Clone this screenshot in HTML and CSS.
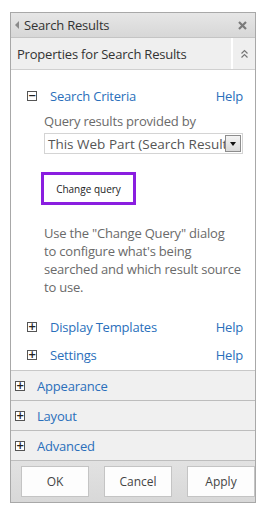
FILE: index.html
```html
<!DOCTYPE html>
<html lang="en">
<head>
    <meta charset="UTF-8">
    <meta name="viewport" content="width=device-width, initial-scale=1.0">
    <title>Search Results</title>
    <link rel="stylesheet" href="styles.css">
</head>
<body>
    <div class="panel">
        <div class="title-bar">
            <span class="title-arrow"></span>
            <span class="title-text">Search Results</span>
            <svg class="close" width="9" height="9" viewBox="0 0 9 9">
                <path d="M1 1 L8 8 M8 1 L1 8" stroke="#7a7a7a" stroke-width="2.2"/>
            </svg>
        </div>

        <div class="props-header">
            <div class="props-title">Properties for Search Results</div>
            <div class="props-toggle">
                <svg width="9" height="10" viewBox="0 0 9 10">
                    <path d="M1.5 4.5 L4.5 1.5 L7.5 4.5 M1.5 8.5 L4.5 5.5 L7.5 8.5" fill="none" stroke="#777" stroke-width="1.2"/>
                </svg>
            </div>
        </div>

        <div class="props-body">
            <div class="group">
                <div class="group-head">
                    <span class="toggle-box">&minus;</span>
                    <a class="group-name">Search Criteria</a>
                    <a class="help">Help</a>
                </div>
                <div class="group-content">
                    <div class="field-label">Query results provided by</div>
                    <div class="select">
                        <span class="select-text">This Web Part (Search Results)</span>
                        <span class="select-btn"></span>
                    </div>
                    <button class="change-query">Change query</button>
                    <p class="hint">Use the "Change Query" dialog<br>to configure what's being<br>searched and which result source<br>to use.</p>
                </div>
            </div>

            <div class="group">
                <div class="group-head">
                    <span class="toggle-box">+</span>
                    <a class="group-name">Display Templates</a>
                    <a class="help">Help</a>
                </div>
            </div>

            <div class="group">
                <div class="group-head">
                    <span class="toggle-box">+</span>
                    <a class="group-name">Settings</a>
                    <a class="help">Help</a>
                </div>
            </div>
        </div>

        <div class="section"><span class="toggle-box">+</span><a class="section-name">Appearance</a></div>
        <div class="section"><span class="toggle-box">+</span><a class="section-name">Layout</a></div>
        <div class="section"><span class="toggle-box">+</span><a class="section-name">Advanced</a></div>

        <div class="footer">
            <button class="btn">OK</button>
            <button class="btn">Cancel</button>
            <button class="btn">Apply</button>
        </div>
    </div>
</body>
</html>
```

FILE: styles.css
```css
:root {
    --link-color: #2a6fbb;
    --text-color: #444;
    --muted-color: #6a6a6a;
    --border-color: #a8a8a8;
}

* {
    margin: 0;
    padding: 0;
    box-sizing: border-box;
}

body {
    font-family: "Open Sans", "Noto Sans", sans-serif;
    background: #fff;
    color: var(--text-color);
    padding: 12px 9px 0 10px;
}

.panel {
    width: 246px;
    border: 1px solid var(--border-color);
    background: #fff;
}

.title-bar {
    height: 25px;
    display: flex;
    align-items: center;
    padding: 0 8px 0 4px;
    background: linear-gradient(#e6e6e6, #d7d7d7);
    border-bottom: 1px solid #c4c4c4;
    font-size: 13px;
    color: #333;
}

.title-arrow {
    width: 0;
    height: 0;
    border-top: 4px solid transparent;
    border-bottom: 4px solid transparent;
    border-right: 4px solid #8a8a8a;
    margin-right: 5px;
}

.title-text {
    flex: 1;
    letter-spacing: -0.2px;
}

.props-header {
    display: flex;
    height: 32px;
    gap: 2px;
    border-bottom: 1px solid #d0d0d0;
}

.props-title {
    flex: 1;
    background: #efefef;
    display: flex;
    align-items: center;
    padding-left: 6px;
    font-size: 13px;
    color: #333;
    letter-spacing: -0.2px;
}

.props-toggle {
    width: 22px;
    background: #efefef;
    display: flex;
    align-items: center;
    justify-content: center;
}

.props-body {
    padding: 17px 12px 6px 16px;
    border-bottom: 1px solid #c8c8c8;
}

.group-head {
    display: flex;
    align-items: center;
    height: 18px;
    margin-bottom: 10px;
}

.group:last-child .group-head {
    margin-bottom: 0;
}

.toggle-box {
    width: 10px;
    height: 10px;
    border: 1px solid #555;
    background: #fff;
    font-size: 10px;
    line-height: 8px;
    text-align: center;
    color: #222;
    font-family: "DejaVu Sans", sans-serif;
    font-weight: bold;
    margin-right: 13px;
    flex-shrink: 0;
}

.group-name, .help, .section-name {
    color: var(--link-color);
    font-size: 13px;
    letter-spacing: -0.2px;
}

.group-name {
    flex: 1;
}

.group-content {
    padding-left: 17px;
    margin-top: -3px;
    margin-bottom: 22px;
}

.field-label {
    font-size: 13px;
    color: var(--muted-color);
    letter-spacing: -0.2px;
    margin-bottom: 3px;
}

.select {
    display: flex;
    align-items: center;
    height: 21px;
    border: 1px solid #d4d4d4;
    overflow: hidden;
}

.select-text {
    flex: 1;
    white-space: nowrap;
    overflow: hidden;
    font-size: 13.5px;
    color: #555;
    padding-left: 3px;
}

.select-btn {
    width: 16px;
    height: 17px;
    margin-right: 1px;
    border: 1px solid #8d8d8d;
    background: linear-gradient(#f4f4f4, #d9d9d9);
    position: relative;
    flex-shrink: 0;
}

.select-btn::after {
    content: "";
    position: absolute;
    left: 4px;
    top: 6px;
    border-left: 3px solid transparent;
    border-right: 3px solid transparent;
    border-top: 4px solid #111;
}

.change-query {
    display: block;
    width: 95px;
    height: 33px;
    margin: 18px 0 0 -3px;
    border: 3px solid #8a1ee0;
    background: #fff;
    font-family: inherit;
    font-size: 10px;
    color: #222;
}

.hint {
    font-size: 13px;
    letter-spacing: -0.2px;
    line-height: 18px;
    white-space: nowrap;
    color: var(--muted-color);
    margin: 19px -3px 0 0;
}

.section {
    display: flex;
    align-items: center;
    height: 30px;
    padding-left: 4px;
    background: #f0f0f0;
    border-bottom: 1px solid #bdbdbd;
}

.section .toggle-box {
    margin-right: 12px;
}

.footer {
    display: flex;
    justify-content: space-between;
    padding: 5px 0 5px 10px;
    background: linear-gradient(#e2e2e2, #d8d8d8);
}

.btn {
    width: 68px;
    height: 31px;
    border: 1px solid #c4c4c4;
    background: #fdfdfd;
    font-family: inherit;
    font-size: 12px;
    color: #444;
}
```
